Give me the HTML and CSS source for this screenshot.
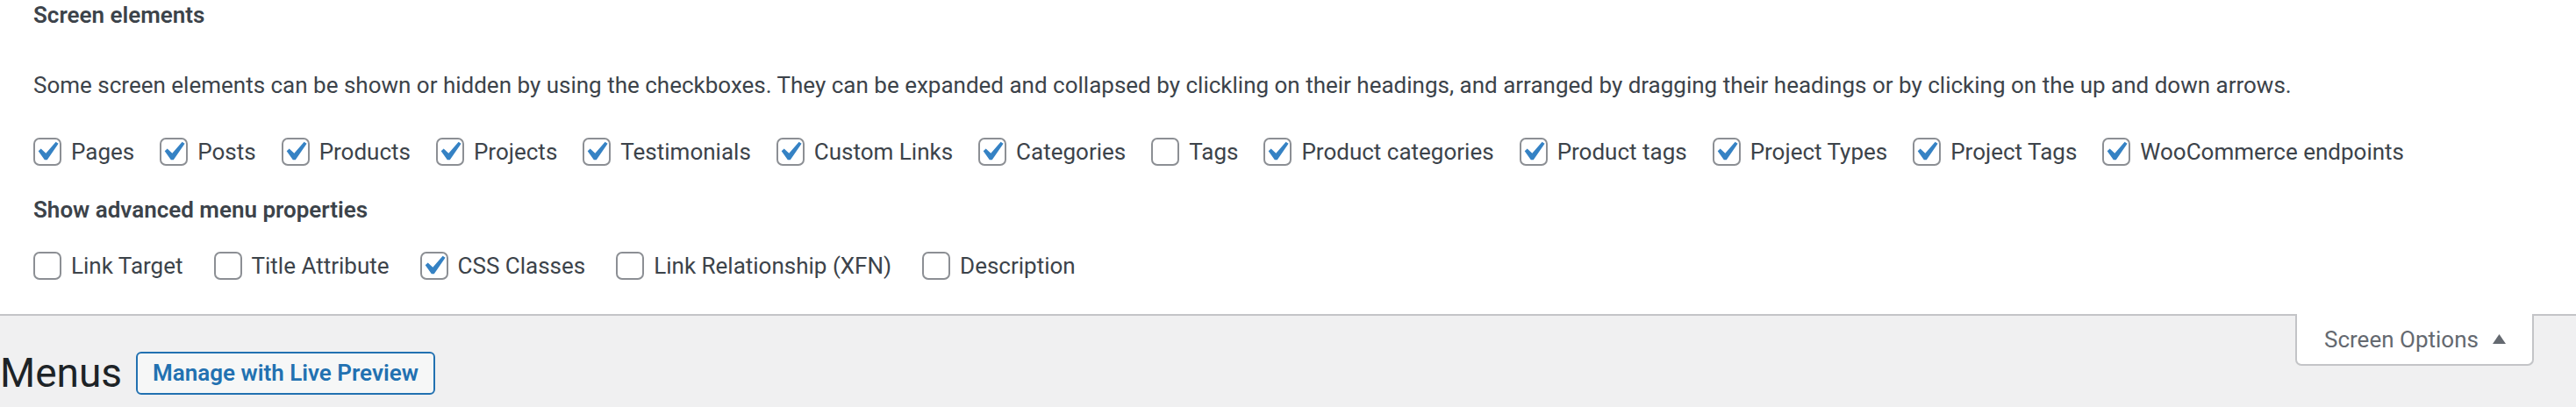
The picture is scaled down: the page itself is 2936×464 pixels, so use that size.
FILE: index.html
```html
<!DOCTYPE html>
<html lang="en">
<head>
    <meta charset="UTF-8">
    <meta name="viewport" content="width=device-width, initial-scale=1.0">
    <title>Menus</title>
    <link rel="stylesheet" href="styles.css">
</head>
<body>
    <div id="screenMeta">
        <div class="options-wrap">
            <h5 class="options-title">Screen elements</h5>
            <p class="options-desc">Some screen elements can be shown or hidden by using the checkboxes. They can be expanded and collapsed by clickling on their headings, and arranged by dragging their headings or by clicking on the up and down arrows.</p>
            <div class="prefs prefs-main">
                <label class="pref"><span class="box checked"><svg viewBox="0 0 20 20"><path d="M14.83 4.89l1.34.94-5.81 8.38H9.02L5.78 9.67l1.34-1.25 2.57 2.4z"/></svg></span>Pages</label>
                <label class="pref"><span class="box checked"><svg viewBox="0 0 20 20"><path d="M14.83 4.89l1.34.94-5.81 8.38H9.02L5.78 9.67l1.34-1.25 2.57 2.4z"/></svg></span>Posts</label>
                <label class="pref"><span class="box checked"><svg viewBox="0 0 20 20"><path d="M14.83 4.89l1.34.94-5.81 8.38H9.02L5.78 9.67l1.34-1.25 2.57 2.4z"/></svg></span>Products</label>
                <label class="pref"><span class="box checked"><svg viewBox="0 0 20 20"><path d="M14.83 4.89l1.34.94-5.81 8.38H9.02L5.78 9.67l1.34-1.25 2.57 2.4z"/></svg></span>Projects</label>
                <label class="pref"><span class="box checked"><svg viewBox="0 0 20 20"><path d="M14.83 4.89l1.34.94-5.81 8.38H9.02L5.78 9.67l1.34-1.25 2.57 2.4z"/></svg></span>Testimonials</label>
                <label class="pref"><span class="box checked"><svg viewBox="0 0 20 20"><path d="M14.83 4.89l1.34.94-5.81 8.38H9.02L5.78 9.67l1.34-1.25 2.57 2.4z"/></svg></span>Custom Links</label>
                <label class="pref"><span class="box checked"><svg viewBox="0 0 20 20"><path d="M14.83 4.89l1.34.94-5.81 8.38H9.02L5.78 9.67l1.34-1.25 2.57 2.4z"/></svg></span>Categories</label>
                <label class="pref"><span class="box"></span>Tags</label>
                <label class="pref"><span class="box checked"><svg viewBox="0 0 20 20"><path d="M14.83 4.89l1.34.94-5.81 8.38H9.02L5.78 9.67l1.34-1.25 2.57 2.4z"/></svg></span>Product categories</label>
                <label class="pref"><span class="box checked"><svg viewBox="0 0 20 20"><path d="M14.83 4.89l1.34.94-5.81 8.38H9.02L5.78 9.67l1.34-1.25 2.57 2.4z"/></svg></span>Product tags</label>
                <label class="pref"><span class="box checked"><svg viewBox="0 0 20 20"><path d="M14.83 4.89l1.34.94-5.81 8.38H9.02L5.78 9.67l1.34-1.25 2.57 2.4z"/></svg></span>Project Types</label>
                <label class="pref"><span class="box checked"><svg viewBox="0 0 20 20"><path d="M14.83 4.89l1.34.94-5.81 8.38H9.02L5.78 9.67l1.34-1.25 2.57 2.4z"/></svg></span>Project Tags</label>
                <label class="pref"><span class="box checked"><svg viewBox="0 0 20 20"><path d="M14.83 4.89l1.34.94-5.81 8.38H9.02L5.78 9.67l1.34-1.25 2.57 2.4z"/></svg></span>WooCommerce endpoints</label>
            </div>
            <h5 class="options-title options-title-adv">Show advanced menu properties</h5>
            <div class="prefs prefs-adv">
                <label class="pref"><span class="box"></span>Link Target</label>
                <label class="pref"><span class="box"></span>Title Attribute</label>
                <label class="pref"><span class="box checked"><svg viewBox="0 0 20 20"><path d="M14.83 4.89l1.34.94-5.81 8.38H9.02L5.78 9.67l1.34-1.25 2.57 2.4z"/></svg></span>CSS Classes</label>
                <label class="pref"><span class="box"></span>Link Relationship (XFN)</label>
                <label class="pref"><span class="box"></span>Description</label>
            </div>
        </div>
    </div>
    <div id="bodyContent">
        <div class="meta-links">
            <button class="show-settings" type="button">Screen Options <svg class="arrow" viewBox="0 0 15 11"><path d="M7.5 0L15 11H0z"/></svg></button>
        </div>
        <div class="wrap">
            <h1 class="page-title">Menus</h1>
            <a class="title-action" href="#">Manage with Live Preview</a>
        </div>
    </div>
</body>
</html>
```
FILE: styles.css
```css
body {
    margin: 0;
    font-family: Roboto, "Liberation Sans", sans-serif;
    background-color: #F0F0F1;
    color: #3C434A;
}
#screenMeta {
    background: #FFFFFF;
    border-bottom: 2px solid #C3C4C7;
}
.options-wrap {
    padding: 1px 40px 25px 38px;
}
.options-title {
    margin: 0;
    font-size: 26px;
    line-height: 32px;
    font-weight: 600;
}
.options-title-adv {
    margin-top: 20px;
}
.options-desc {
    margin: 46px 0 0;
    font-size: 26px;
    line-height: 36px;
}
.prefs {
    display: flex;
    align-items: center;
    height: 61px;
}
.prefs-main {
    margin-top: 27px;
    column-gap: 29px;
}
.prefs-adv {
    margin-top: 17px;
    column-gap: 35px;
}
.pref {
    display: flex;
    align-items: center;
    gap: 11px;
    font-size: 26px;
    white-space: nowrap;
}
.box {
    position: relative;
    width: 32px;
    height: 32px;
    box-sizing: border-box;
    border: 2px solid #8C8F94;
    border-radius: 7px;
    background: #FFFFFF;
}
.box svg {
    position: absolute;
    left: -9px;
    top: -8px;
    width: 44px;
    height: 44px;
    fill: #3582C4;
}
#bodyContent {
    position: relative;
    height: 104px;
}
/* tab hangs over the panel border */
.meta-links {
    position: absolute;
    top: -2px;
    right: 48px;
}
.show-settings {
    display: flex;
    align-items: center;
    gap: 16px;
    box-sizing: border-box;
    width: 272px;
    height: 59px;
    padding: 0 0 0 31px;
    background: #FFFFFF;
    border: 2px solid #C3C4C7;
    border-top: none;
    border-radius: 0 0 7px 7px;
    font-family: inherit;
    font-size: 26px;
    color: #646970;
}
.arrow {
    width: 15px;
    height: 11px;
    fill: #646970;
}
.wrap {
    display: flex;
    align-items: center;
    gap: 16px;
    padding-top: 35px;
}
.page-title {
    margin: 0;
    font-size: 46px;
    font-weight: 400;
    line-height: 60px;
    color: #1D2327;
}
.title-action {
    box-sizing: border-box;
    height: 49px;
    padding: 0 17px;
    display: flex;
    align-items: center;
    border: 2px solid #2271B1;
    border-radius: 6px;
    background: #F6F7F7;
    color: #2271B1;
    font-size: 26px;
    font-weight: 600;
    text-decoration: none;
}
```
